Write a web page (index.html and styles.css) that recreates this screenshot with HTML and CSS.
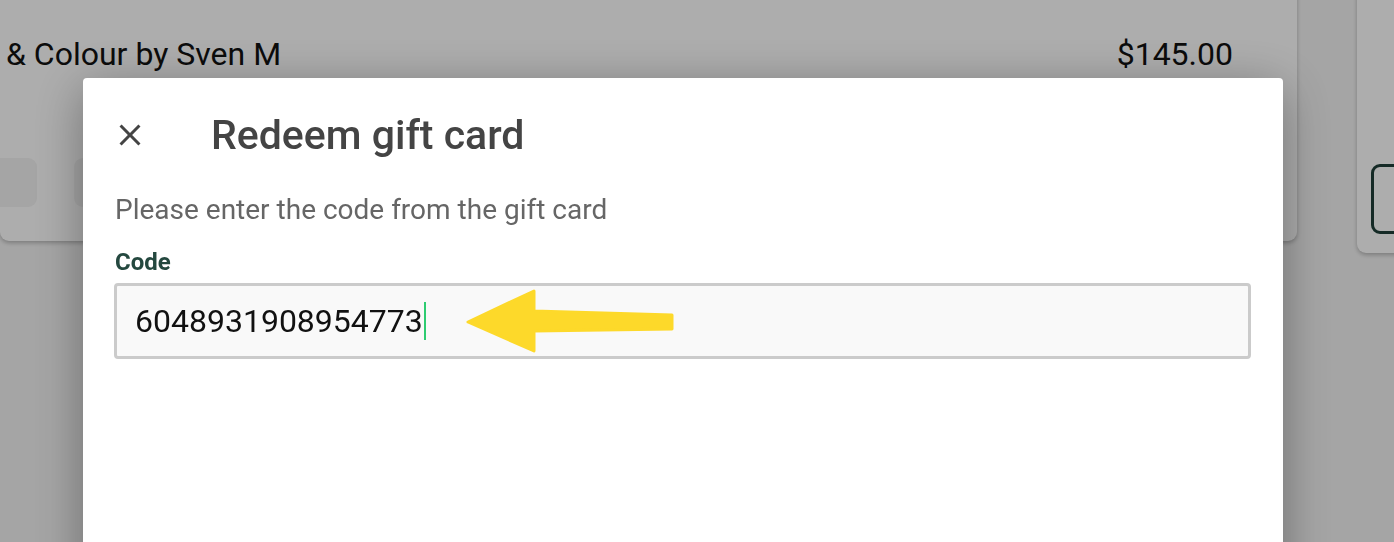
FILE: index.html
```html
<!DOCTYPE html>
<html>
<head>
<meta charset="utf-8">
<link rel="stylesheet" href="styles.css">
</head>
<body>
<div class="page">
  <div class="card card-main">
    <div class="item-row">
      <span class="item-name">&amp; Colour by Sven M</span>
      <span class="item-price">$145.00</span>
    </div>
    <div class="btn-row">
      <div class="ghost-btn first"></div>
      <div class="ghost-btn"></div>
    </div>
  </div>
  <div class="card card-side">
    <div class="outline-btn"></div>
  </div>
</div>
<div class="overlay"></div>
<div class="modal">
  <div class="modal-head">
    <span class="close">
      <svg width="36" height="36" viewBox="0 0 24 24"><path d="M19 6.41 17.59 5 12 10.59 6.41 5 5 6.41 10.59 12 5 17.59 6.41 19 12 13.41 17.59 19 19 17.59 13.41 12z" fill="#444"/></svg>
    </span>
    <h2 class="title">Redeem gift card</h2>
  </div>
  <p class="hint">Please enter the code from the gift card</p>
  <label class="label">Code</label>
  <div class="field">
    <span class="value">6048931908954773</span><span class="caret"></span>
    <svg class="arrow" width="212" height="64" viewBox="0 0 212 64"><path d="M68 2 L2 33 L68 62 L68 42 L206 40 L206 26 L68 22 Z" fill="#fdd92a" stroke="#fdd92a" stroke-width="3" stroke-linejoin="round"/></svg>
  </div>
</div>
</body>
</html>
```
FILE: styles.css
```css
html, body { margin: 0; padding: 0; }
body {
  width: 1394px;
  height: 542px;
  overflow: hidden;
  background: #f4f4f4;
  font-family: Roboto, "Liberation Sans", sans-serif;
  color: #111;
}
.page {
  display: flex;
  gap: 60px;
  align-items: flex-start;
  margin-top: -20px;
}
.card {
  background: #fff;
  border-radius: 0 0 9px 9px;
  box-shadow: 0 2px 4px rgba(0,0,0,0.25);
}
.card-main {
  width: 1297px;
  height: 261px;
  flex: none;
}
.item-row {
  display: flex;
  justify-content: space-between;
  padding: 55px 64px 0 6px;
  font-size: 32px;
  line-height: 38px;
}
.btn-row {
  display: flex;
  gap: 37px;
  margin-top: 85px;
  margin-left: -40px;
}
.ghost-btn {
  width: 77px;
  height: 49px;
  background: #f3f3f3;
  border-radius: 9px;
}
.card-side {
  width: 200px;
  height: 273px;
  flex: none;
  padding: 184px 0 0 14px;
  box-sizing: border-box;
}
.outline-btn {
  width: 100px;
  height: 64px;
  border: 3px solid #1f3f38;
  border-radius: 9px;
}
.overlay {
  position: fixed;
  inset: 0;
  background: rgba(0,0,0,0.32);
}
.modal {
  position: fixed;
  left: 83px;
  top: 78px;
  width: 1200px;
  height: 520px;
  background: #fff;
  border-radius: 4px;
  box-shadow: 0 10px 50px rgba(0,0,0,0.35);
  padding: 0 32px;
  box-sizing: border-box;
}
.modal-head {
  display: flex;
  align-items: center;
  height: 113px;
}
.close {
  display: flex;
  margin-left: -3px;
  width: 36px;
  height: 36px;
  margin-right: 63px;
}
.title {
  margin: 0;
  font-size: 41px;
  line-height: 48px;
  font-weight: 500;
  color: #444;
}
.hint {
  margin: 0;
  font-size: 28px;
  line-height: 38px;
  color: #666;
}
.label {
  display: block;
  margin-top: 19px;
  font-size: 24px;
  font-weight: 700;
  color: #24483f;
  line-height: 28px;
}
.field {
  margin-top: 7px;
  height: 76px;
  border: 3px solid #cbcbcb;
  border-radius: 4px;
  background: #f9f9f9;
  box-sizing: border-box;
  display: flex;
  align-items: center;
  padding-left: 18px;
  margin-left: -1px;
}
.value {
  font-size: 32px;
  line-height: 38px;
  color: #111;
}
.caret {
  width: 2px;
  height: 38px;
  background: #2ecc71;
  margin-left: 1px;
}
.arrow {
  margin-left: 40px;
}
```
